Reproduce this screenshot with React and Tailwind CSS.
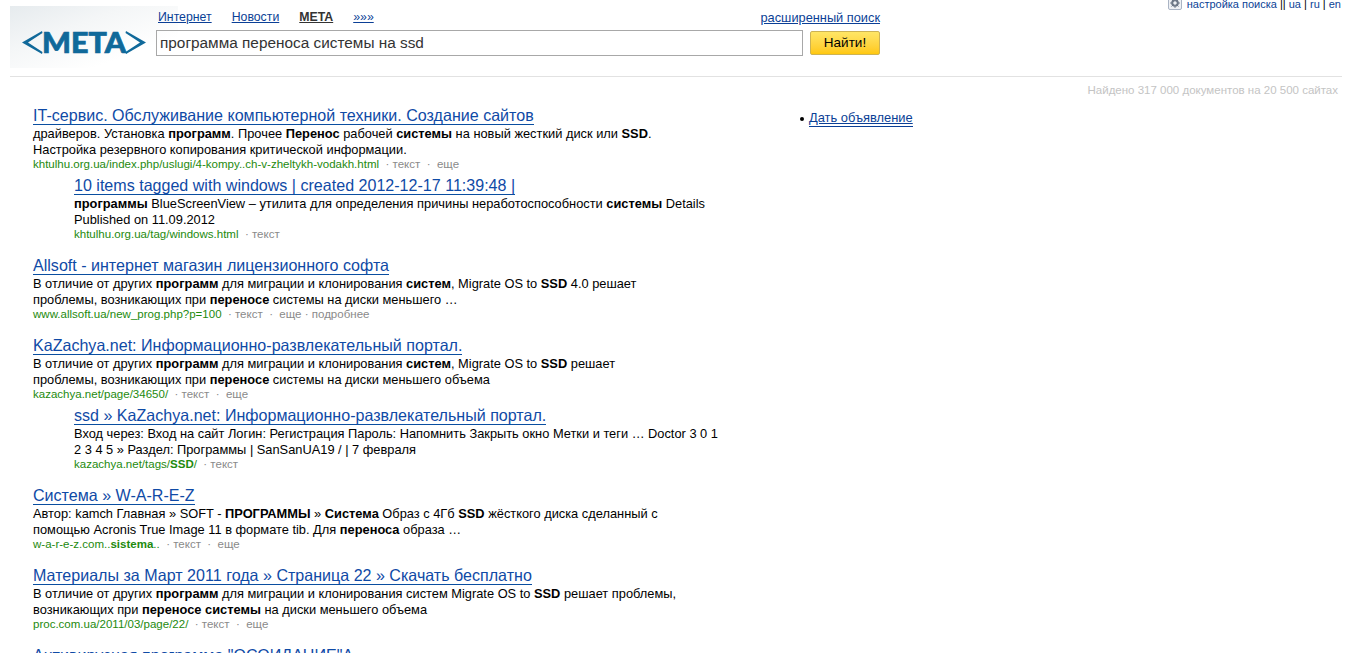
const results = [
  {
    title: "IT-сервис. Обслуживание компьютерной техники. Создание сайтов",
    lines: [
      <>драйверов. Установка <b>программ</b>. Прочее <b>Перенос</b> рабочей <b>системы</b> на новый жесткий диск или <b>SSD</b>.</>,
      <>Настройка резервного копирования критической информации.</>,
    ],
    url: "khtulhu.org.ua/index.php/uslugi/4-kompy..ch-v-zheltykh-vodakh.html",
    more: true,
    sub: {
      title: "10 items tagged with windows | created 2012-12-17 11:39:48 |",
      lines: [
        <><b>программы</b> BlueScreenView – утилита для определения причины неработоспособности <b>системы</b> Details</>,
        <>Published on 11.09.2012</>,
      ],
      url: "khtulhu.org.ua/tag/windows.html",
    },
  },
  {
    title: "Allsoft - интернет магазин лицензионного софта",
    lines: [
      <>В отличие от других <b>программ</b> для миграции и клонирования <b>систем</b>, Migrate OS to <b>SSD</b> 4.0 решает</>,
      <>проблемы, возникающих при <b>переносе</b> системы на диски меньшего …</>,
    ],
    url: "www.allsoft.ua/new_prog.php?p=100",
    more: true,
    details: true,
  },
  {
    title: "KaZachya.net: Информационно-развлекательный портал.",
    lines: [
      <>В отличие от других <b>программ</b> для миграции и клонирования <b>систем</b>, Migrate OS to <b>SSD</b> решает</>,
      <>проблемы, возникающих при <b>переносе</b> системы на диски меньшего объема</>,
    ],
    url: "kazachya.net/page/34650/",
    more: true,
    sub: {
      title: "ssd » KaZachya.net: Информационно-развлекательный портал.",
      lines: [
        <>Вход через: Вход на сайт Логин: Регистрация Пароль: Напомнить Закрыть окно Метки и теги … Doctor 3 0 1</>,
        <>2 3 4 5 » Раздел: Программы | SanSanUA19 / | 7 февраля</>,
      ],
      url: <>kazachya.net/tags/<b>SSD</b>/</>,
    },
  },
  {
    title: "Система » W-A-R-E-Z",
    lines: [
      <>Автор: kamch Главная » SOFT - <b>ПРОГРАММЫ</b> » <b>Система</b> Образ с 4Гб <b>SSD</b> жёсткого диска сделанный с</>,
      <>помощью Acronis True Image 11 в формате tib. Для <b>переноса</b> образа …</>,
    ],
    url: <>w-a-r-e-z.com..<b>sistema</b>..</>,
    more: true,
  },
  {
    title: "Материалы за Март 2011 года » Страница 22 » Скачать бесплатно",
    lines: [
      <>В отличие от других <b>программ</b> для миграции и клонирования систем Migrate OS to <b>SSD</b> решает проблемы,</>,
      <>возникающих при <b>переносе системы</b> на диски меньшего объема</>,
    ],
    url: "proc.com.ua/2011/03/page/22/",
    more: true,
  },
  {
    title: "Антивирусная программа \"ОСОИДАНИЕ\"А",
    lines: [],
    url: null,
  },
]

function Hit({ hit, nested }) {
  return (
    <div className={nested ? "ml-[41px] mt-[4px]" : ""}>
      <div className="h-[21px] text-[16.07px] leading-[20px]">
        <a href="#" className="inline-block h-[20px] text-[#0f4aa6] border-b border-[#0a4ea0] whitespace-nowrap">{hit.title}</a>
      </div>
      {hit.lines.map((line, i) => (
        <p key={i} className="h-[16px] text-[12.84px] leading-[16px] text-black whitespace-nowrap">{line}</p>
      ))}
      {hit.url && (
        <div className="h-[13px] text-[11.52px] leading-[13px] whitespace-nowrap text-[#8a8a8a]">
          <span className="text-[#1d8a0e]">{hit.url}</span>
          <span>&nbsp; · текст</span>
          {hit.more && <span>&nbsp; · &nbsp;еще</span>}
          {hit.details && <span> · подробнее</span>}
        </div>
      )}
    </div>
  )
}

function Logo() {
  return (
    <div className="w-[168px] -mr-[22px] h-[62px] bg-gradient-to-br from-[#e6ebee] via-[#f4f6f7] via-35% to-white to-75% pl-[12px] pt-[25px]">
      <svg width="124" height="24" viewBox="0 0 124 24" className="block">
        <path d="M20 0 L0 11.500 L20 23 L20.500 21 L6 11.500 L20.500 2 Z" fill="#10699a" />
        <path d="M104 0 L124 11.500 L104 23 L103.500 21 L118 11.500 L103.500 2 Z" fill="#10699a" />
        <text x="62" y="22" textAnchor="middle" textLength="84" lengthAdjust="spacingAndGlyphs" fontFamily="Lato, sans-serif" fontWeight="900" fontSize="29" stroke="#10699a" strokeWidth="0.7" fill="#10699a">META</text>
      </svg>
    </div>
  )
}

export default function App() {
  return (
    <div className="relative h-[653px] overflow-hidden bg-white font-['Liberation_Sans',Arial,sans-serif]">
      {/* top right settings */}
      <div className="absolute right-[5px] -top-[1px] h-[10px] flex items-center text-[11px] leading-[10px] text-[#0b3f96] whitespace-nowrap">
        <span className="mr-[5px] -mt-[2px] w-[14px] h-[13px] border border-[#aab4c4] rounded-[2px] bg-[#eef0f4] flex items-center justify-center">
          <svg width="10" height="10" viewBox="0 0 10 10">
            <circle cx="5" cy="5" r="3" fill="none" stroke="#6c7686" strokeWidth="1.6" />
            <path d="M5 0v10M0 5h10M1.500 1.500l7 7M8.500 1.500l-7 7" stroke="#6c7686" strokeWidth="0.9" />
            <circle cx="5" cy="5" r="1.300" fill="#eef0f4" />
          </svg>
        </span>
        <a href="#">настройка поиска</a>
        <span className="text-black">&nbsp;||&nbsp;</span>
        <a href="#">ua</a>
        <span className="text-black">&nbsp;|&nbsp;</span>
        <a href="#">ru</a>
        <span className="text-black">&nbsp;|&nbsp;</span>
        <a href="#">en</a>
      </div>

      {/* header */}
      <div className="ml-[10px] mr-[4px] h-[77px] border-b border-[#e2e2e2] pt-[6px] flex">
        <Logo />
        <div className="w-[724px]">
          <div className="flex justify-between items-center h-[22px] pl-[2px] pt-[1px]">
            <div className="flex gap-[20px] text-[12.3px]">
              <a href="#" className="text-[#0b3f96] underline">Интернет</a>
              <a href="#" className="text-[#0b3f96] underline">Новости</a>
              <a href="#" className="text-[#333] font-bold underline">META</a>
              <a href="#" className="text-[#0b3f96] underline">»»»</a>
            </div>
            <a href="#" className="text-[#0b3f96] underline text-[12.8px]">расширенный поиск</a>
          </div>
          <div className="flex items-center justify-between mt-[2px]">
            <input
              readOnly
              value="программа переноса системы на ssd"
              className="w-[647px] h-[26px] border border-[#a8a8a8] px-[3px] text-[15.36px] text-[#333] outline-none"
            />
            <button className="w-[70px] h-[24px] rounded-[2px] border border-[#cdb355] bg-gradient-to-b from-[#ffe665] to-[#ffc80a] text-[13.5px] text-black">Найти!</button>
          </div>
        </div>
      </div>

      <div className="pr-[8px] pt-[6px] h-[14px] text-right text-[11.5px] leading-[14px] text-[#c4c4c4]">
        Найдено 317 000 документов на 20 500 сайтах
      </div>

      <div className="flex pl-[33px] pt-[14px]">
        <div className="w-[767px] flex flex-col gap-[14px]">
          {results.map((r, i) => (
            <div key={i}>
              <Hit hit={r} />
              {r.sub && <Hit hit={r.sub} nested />}
            </div>
          ))}
        </div>
        <div className="text-[12.9px] pt-[5px] flex items-center self-start">
          <span className="mr-[5px] w-[4px] h-[4px] rounded-full bg-black"></span>
          <a href="#" className="text-[#0b3f96] underline border-b border-[#0b3f96] leading-[15px] pb-[1px]">Дать объявление</a>
        </div>
      </div>
    </div>
  )
}
